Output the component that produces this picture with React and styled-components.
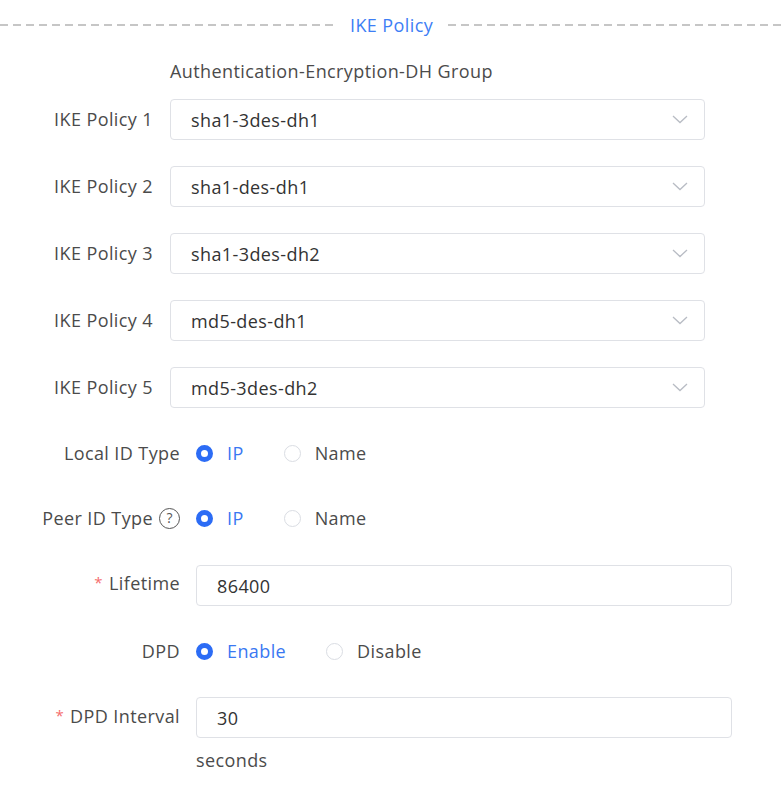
import React from "react";
import styled, { createGlobalStyle } from "styled-components";

const Global = createGlobalStyle`
  html, body { margin: 0; padding: 0; background: #fff; }
  body {
    font-family: "Open Sans", "Noto Sans", sans-serif;
    color: #4b4b4b;
    font-size: 18px;
    letter-spacing: 0.4px;
  }
`;

const Page = styled.div`
  width: 783px;
  padding-top: 13px;
`;

const Divider = styled.div`
  display: flex;
  align-items: center;
  gap: 15px;
  height: 24px;
`;

const Dash = styled.div`
  flex: ${(p) => p.$grow};
  height: 2px;
  background: repeating-linear-gradient(
    to right,
    #c6c6c6 0 8px,
    transparent 8px 13px
  );
`;

const DividerTitle = styled.span`
  color: #3d7ef5;
  white-space: nowrap;
`;

const SubHeader = styled.div`
  margin: 22px 0 0 170px;
  color: #4b4b4b;
  line-height: 24px;
`;

const Row = styled.div`
  display: flex;
  align-items: center;
  margin-top: ${(p) => p.$mt}px;
  min-height: ${(p) => p.$h || 32}px;
`;

const Label = styled.div`
  width: ${(p) => p.$w}px;
  margin-right: ${(p) => p.$gap}px;
  display: flex;
  justify-content: flex-end;
  align-items: center;
  gap: 6px;
  color: #4b4b4b;
  white-space: nowrap;
  flex-shrink: 0;
  position: relative;
  top: ${(p) => p.$shift || 0}px;
`;

const Star = styled.span`
  color: #f56c6c;
  font-size: 15px;
  margin-right: 6px;
  position: relative;
  top: -2px;
`;

const Field = styled.div`
  width: ${(p) => p.$w}px;
  height: 41px;
  box-sizing: border-box;
  border: 1px solid #dfe1e6;
  border-radius: 4px;
  display: flex;
  align-items: center;
  justify-content: space-between;
  padding: 0 16px 0 20px;
  color: #333;
`;

const RadioGroup = styled.div`
  display: flex;
  align-items: center;
`;

const RadioItem = styled.label`
  display: flex;
  align-items: center;
  gap: 14px;
  margin-right: ${(p) => p.$mr}px;
  color: ${(p) => (p.$on ? "#3a78f2" : "#4b4b4b")};
`;

const RadioDot = styled.span`
  width: 17px;
  height: 17px;
  box-sizing: border-box;
  border-radius: 50%;
  border: ${(p) => (p.$on ? "5px solid #2c6cf5" : "1px solid #dadde3")};
  background: #fff;
  flex-shrink: 0;
`;

const Help = styled.span`
  width: 21px;
  height: 21px;
  box-sizing: border-box;
  border: 1.5px solid #555;
  border-radius: 50%;
  display: inline-flex;
  align-items: center;
  justify-content: center;
  font-size: 14px;
  letter-spacing: 0;
  line-height: 1;
  color: #555;
`;

const Suffix = styled.div`
  margin: 10px 0 0 196px;
  color: #4b4b4b;
`;

const Chevron = () => (
  <svg width="16" height="9" viewBox="0 0 16 9" fill="none">
    <path d="M1 1l7 6.5L15 1" stroke="#b8bcc4" strokeWidth="1.3" />
  </svg>
);

const policies = [
  "sha1-3des-dh1",
  "sha1-des-dh1",
  "sha1-3des-dh2",
  "md5-des-dh1",
  "md5-3des-dh2",
];

const Radios = ({ options, value }) => (
  <RadioGroup>
    {options.map((o, i) => (
      <RadioItem key={o} $on={o === value} $mr={i === 0 ? 40 : 0}>
        <RadioDot $on={o === value} />
        {o}
      </RadioItem>
    ))}
  </RadioGroup>
);

export default function App() {
  return (
    <Page>
      <Global />
      <Divider>
        <Dash $grow="0 0 335px" />
        <DividerTitle>IKE Policy</DividerTitle>
        <Dash $grow="1" />
      </Divider>
      <SubHeader>Authentication-Encryption-DH Group</SubHeader>
      {policies.map((p, i) => (
        <Row key={p} $mt={i === 0 ? 16 : 26} $h={41}>
          <Label $w={153} $gap={17} $shift={-1}>
            IKE Policy {i + 1}
          </Label>
          <Field $w={535}>
            {p}
            <Chevron />
          </Field>
        </Row>
      ))}
      <Row $mt={29}>
        <Label $w={180} $gap={16}>Local ID Type</Label>
        <Radios options={["IP", "Name"]} value="IP" />
      </Row>
      <Row $mt={33}>
        <Label $w={180} $gap={16}>
          Peer ID Type <Help>?</Help>
        </Label>
        <Radios options={["IP", "Name"]} value="IP" />
      </Row>
      <Row $mt={31} $h={41}>
        <Label $w={180} $gap={16} $shift={-3}>
          <span><Star>*</Star>Lifetime</span>
        </Label>
        <Field $w={536}>86400</Field>
      </Row>
      <Row $mt={29}>
        <Label $w={180} $gap={16}>DPD</Label>
        <Radios options={["Enable", "Disable"]} value="Enable" />
      </Row>
      <Row $mt={30} $h={41}>
        <Label $w={180} $gap={16} $shift={-2}>
          <span><Star>*</Star>DPD Interval</span>
        </Label>
        <Field $w={536}>30</Field>
      </Row>
      <Suffix>seconds</Suffix>
    </Page>
  );
}
